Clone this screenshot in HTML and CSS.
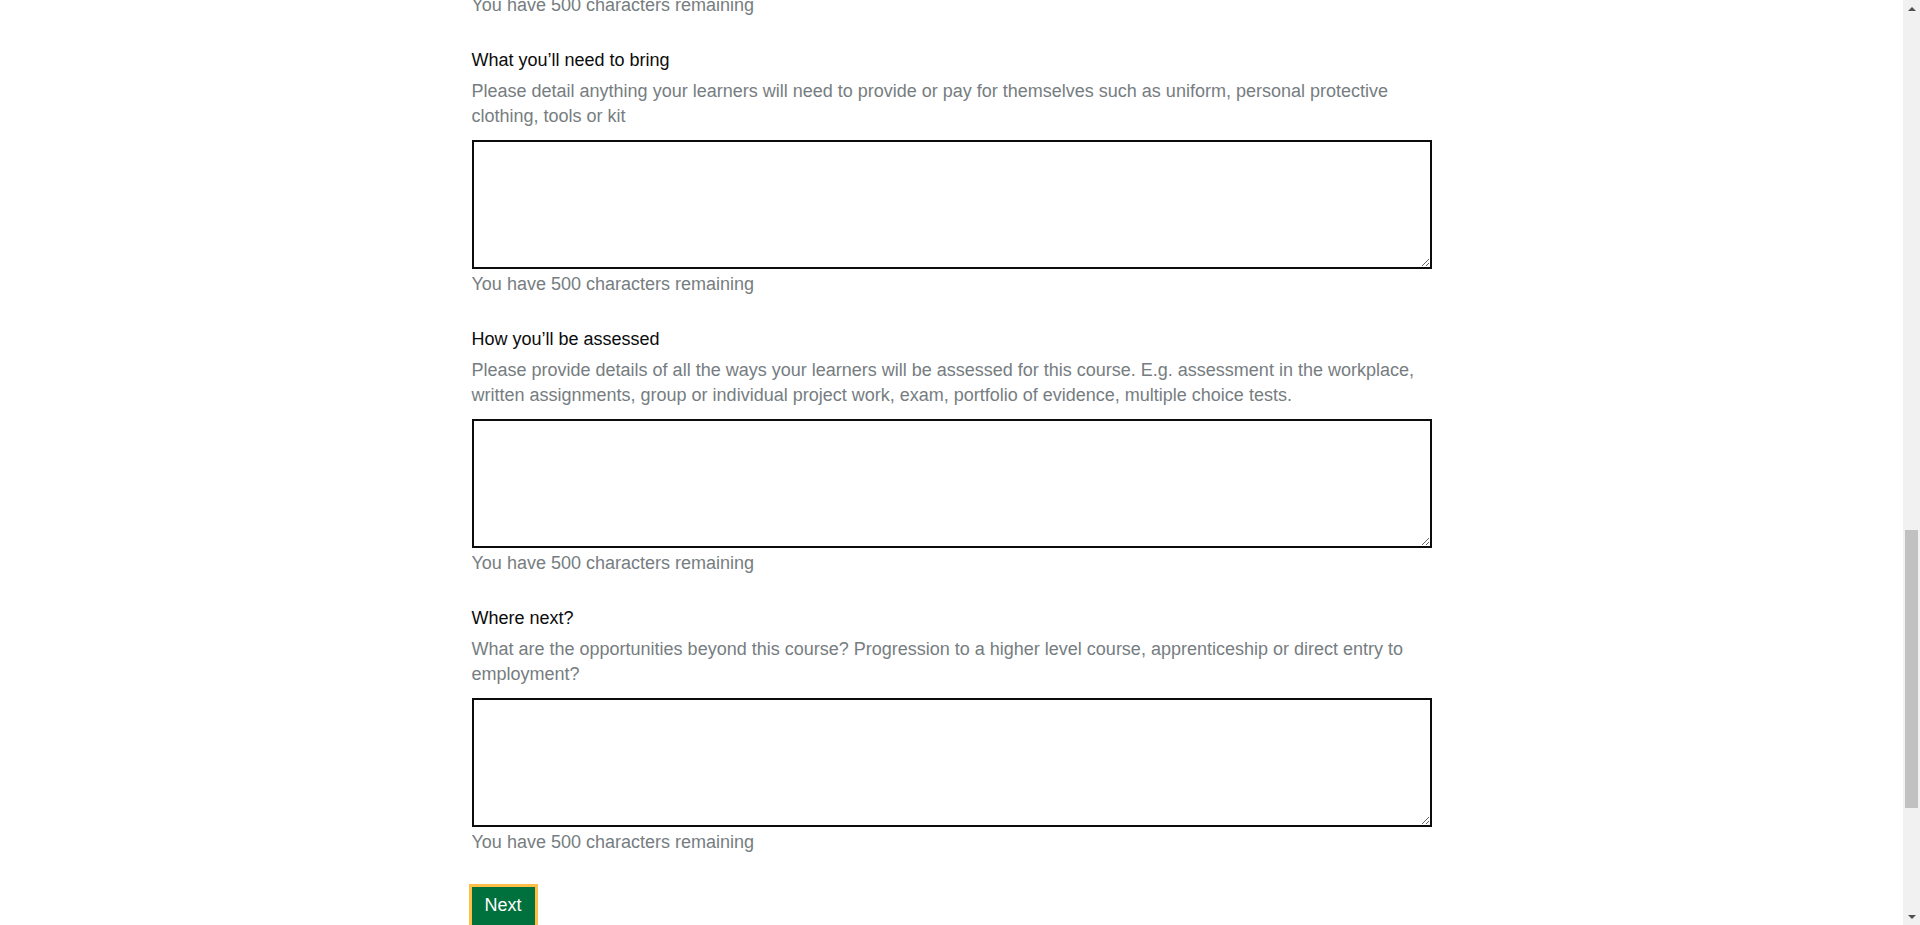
FILE: index.html
```html
<!DOCTYPE html>
<html lang="en">
<head>
<meta charset="utf-8">
<title>Course details</title>
<link rel="stylesheet" href="styles.css">
</head>
<body>
<div class="page">
  <main class="content">
    <div class="count count-first">You have 500 characters remaining</div>

    <div class="field">
      <label class="label" for="bring">What you’ll need to bring</label>
      <div class="hint">Please detail anything your learners will need to provide or pay for themselves such as uniform, personal protective clothing, tools or kit</div>
      <textarea class="textarea" id="bring"></textarea>
      <div class="count">You have 500 characters remaining</div>
    </div>

    <div class="field">
      <label class="label" for="assessed">How you’ll be assessed</label>
      <div class="hint">Please provide details of all the ways your learners will be assessed for this course. E.g. assessment in the workplace, written assignments, group or individual project work, exam, portfolio of evidence, multiple choice tests.</div>
      <textarea class="textarea" id="assessed"></textarea>
      <div class="count">You have 500 characters remaining</div>
    </div>

    <div class="field">
      <label class="label" for="next">Where next?</label>
      <div class="hint">What are the opportunities beyond this course? Progression to a higher level course, apprenticeship or direct entry to employment?</div>
      <textarea class="textarea" id="next"></textarea>
      <div class="count">You have 500 characters remaining</div>
    </div>

    <button class="button" type="submit">Next</button>
  </main>
</div>
<div class="scrollbar" aria-hidden="true">
  <div class="sb-arrow sb-up"><span class="tri tri-up"></span></div>
  <div class="sb-track">
    <div class="sb-space-top"></div>
    <div class="sb-thumb"></div>
  </div>
  <div class="sb-arrow sb-down"><span class="tri tri-down"></span></div>
</div>
</body>
</html>
```

FILE: styles.css
```css
html, body {
  margin: 0;
  padding: 0;
  height: 925px;
  overflow: hidden;
  background: #ffffff;
}

body {
  display: flex;
  font-family: "Liberation Sans", Arial, sans-serif;
  font-size: 18px;
  color: #0b0c0c;
}

.page {
  flex: 1;
  min-width: 0;
  overflow: hidden;
}

.content {
  width: 960px;
  margin: 0 auto;
}

.count {
  font-size: 18px;
  line-height: 25px;
  color: #767d81;
  margin-top: 3px;
}

.count-first {
  margin-top: -7px;
  margin-bottom: 30px;
}

.field {
  margin-bottom: 30px;
}

.label {
  display: block;
  font-size: 18px;
  line-height: 25px;
  color: #0b0c0c;
  margin-bottom: 6px;
}

.hint {
  font-size: 18px;
  line-height: 25px;
  color: #767d81;
  margin-bottom: 11px;
}

.textarea {
  display: block;
  box-sizing: border-box;
  width: 960px;
  height: 129px;
  margin: 0;
  padding: 5px;
  border: 2px solid #0b0c0c;
  border-radius: 0;
  background: #ffffff;
  font-family: "Liberation Sans", Arial, sans-serif;
  font-size: 18px;
}

.field:last-of-type {
  margin-bottom: 0;
}

.button {
  display: block;
  margin-top: 32px;
  padding: 6px 13px 9px;
  border: 0;
  border-radius: 0;
  background: #00703c;
  color: #ffffff;
  font-family: "Liberation Sans", Arial, sans-serif;
  font-size: 18px;
  line-height: 25px;
  outline: 3px solid #ffbf47;
  cursor: pointer;
}

/* Scrollbar imitation */
.scrollbar {
  width: 17px;
  flex: 0 0 17px;
  height: 925px;
  background: #f1f1f1;
  display: flex;
  flex-direction: column;
}

.sb-arrow {
  height: 17px;
  flex: 0 0 17px;
  display: flex;
  align-items: center;
  justify-content: center;
}

.tri {
  width: 0;
  height: 0;
  border-left: 4px solid transparent;
  border-right: 4px solid transparent;
}

.tri-up {
  border-bottom: 4px solid #505050;
}

.tri-down {
  border-top: 4px solid #505050;
}

.sb-track {
  flex: 1;
  display: flex;
  flex-direction: column;
  align-items: center;
}

.sb-space-top {
  height: 513px;
  flex: 0 0 513px;
}

.sb-thumb {
  width: 13px;
  height: 278px;
  background: #c1c1c1;
}
```
